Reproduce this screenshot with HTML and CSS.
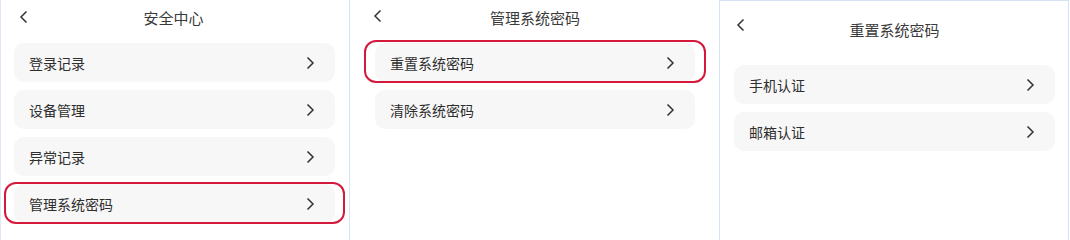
FILE: index.html
```html
<!DOCTYPE html>
<html lang="zh">
<head>
<meta charset="utf-8">
<link rel="stylesheet" href="styles.css">
</head>
<body>
<div class="screens">
  <section class="panel p1">
    <header class="head">
      <svg class="back" width="10" height="14" viewBox="0 0 10 14"><path d="M7.5 1.5 L2 7 L7.5 12.5" fill="none" stroke="#333" stroke-width="1.5"/></svg>
      <h1 class="title">安全中心</h1>
    </header>
    <ul class="list">
      <li class="row"><span>登录记录</span><svg class="chev" width="10" height="14" viewBox="0 0 10 14"><path d="M2.5 1.5 L8 7 L2.5 12.5" fill="none" stroke="#333" stroke-width="1.5"/></svg></li>
      <li class="row"><span>设备管理</span><svg class="chev" width="10" height="14" viewBox="0 0 10 14"><path d="M2.5 1.5 L8 7 L2.5 12.5" fill="none" stroke="#333" stroke-width="1.5"/></svg></li>
      <li class="row"><span>异常记录</span><svg class="chev" width="10" height="14" viewBox="0 0 10 14"><path d="M2.5 1.5 L8 7 L2.5 12.5" fill="none" stroke="#333" stroke-width="1.5"/></svg></li>
      <li class="row hl"><span>管理系统密码</span><svg class="chev" width="10" height="14" viewBox="0 0 10 14"><path d="M2.5 1.5 L8 7 L2.5 12.5" fill="none" stroke="#333" stroke-width="1.5"/></svg></li>
    </ul>
  </section>
  <section class="panel p2">
    <header class="head">
      <svg class="back" width="10" height="14" viewBox="0 0 10 14"><path d="M7.5 1.5 L2 7 L7.5 12.5" fill="none" stroke="#333" stroke-width="1.5"/></svg>
      <h1 class="title">管理系统密码</h1>
    </header>
    <ul class="list">
      <li class="row hl"><span>重置系统密码</span><svg class="chev" width="10" height="14" viewBox="0 0 10 14"><path d="M2.5 1.5 L8 7 L2.5 12.5" fill="none" stroke="#333" stroke-width="1.5"/></svg></li>
      <li class="row"><span>清除系统密码</span><svg class="chev" width="10" height="14" viewBox="0 0 10 14"><path d="M2.5 1.5 L8 7 L2.5 12.5" fill="none" stroke="#333" stroke-width="1.5"/></svg></li>
    </ul>
  </section>
  <section class="panel p3">
    <header class="head">
      <svg class="back" width="10" height="14" viewBox="0 0 10 14"><path d="M7.5 1.5 L2 7 L7.5 12.5" fill="none" stroke="#333" stroke-width="1.5"/></svg>
      <h1 class="title">重置系统密码</h1>
    </header>
    <ul class="list">
      <li class="row"><span>手机认证</span><svg class="chev" width="10" height="14" viewBox="0 0 10 14"><path d="M2.5 1.5 L8 7 L2.5 12.5" fill="none" stroke="#333" stroke-width="1.5"/></svg></li>
      <li class="row"><span>邮箱认证</span><svg class="chev" width="10" height="14" viewBox="0 0 10 14"><path d="M2.5 1.5 L8 7 L2.5 12.5" fill="none" stroke="#333" stroke-width="1.5"/></svg></li>
    </ul>
  </section>
</div>
</body>
</html>
```

FILE: styles.css
```css
* { box-sizing: border-box; }
html, body { margin: 0; padding: 0; background: #fff; }
body {
  width: 1070px;
  height: 240px;
  overflow: hidden;
  font-family: "Noto Sans CJK SC", "Noto Sans", sans-serif;
  color: #333;
}
.screens {
  display: flex;
  height: 240px;
}
.panel {
  height: 240px;
}
.p1 {
  width: 350px;
  border-left: 1px solid #dfe8f6;
  border-right: 1px solid #d6e2f5;
  padding: 0 14px 0 13px;
}
.p2 {
  width: 370px;
  border-right: 1px solid #d6e2f5;
  padding: 0 24px 0 25px;
}
.p3 {
  width: 349px;
  border-top: 1px solid #d6e2f5;
  border-right: 1px solid #d6e2f5;
  padding: 0 13px 0 14px;
}
.head {
  position: relative;
  height: 36px;
  display: flex;
  align-items: center;
  justify-content: center;
}
.p3 .head {
  height: 54px;
}
.back {
  position: absolute;
  top: 10px;
}
.p1 .back { left: 5px; }
.p2 .back { left: -2px; top: 9px; }
.p3 .back { left: 2px; top: 17px; }
.title {
  margin: 0;
  font-size: 15px;
  font-weight: 400;
  color: #3a3a3a;
}
.p1 .title { margin-left: -2px; margin-top: -2px; }
.p2 .title { margin-top: -2px; }
.p3 .title { margin-top: 2px; }
.list {
  list-style: none;
  margin: 7px 0 0;
  padding: 0;
  display: flex;
  flex-direction: column;
  gap: 8px;
}
.p2 .list { margin-top: 7px; }
.p3 .list { margin-top: 10px; }
.row {
  position: relative;
  height: 39px;
  background: #f7f7f7;
  border-radius: 10px;
  display: flex;
  align-items: center;
  justify-content: space-between;
  padding: 0 20px 0 15px;
  font-size: 14px;
  color: #2e2e2e;
}
.row.hl::after {
  content: "";
  position: absolute;
  top: -2px;
  bottom: -1px;
  left: -10px;
  right: -10px;
  border: 2px solid #d41a3c;
  border-radius: 12px;
}
.p2 .row.hl::after { left: -11px; right: -11px; top: -3px; bottom: -1px; }
.chev { flex: none; }
```
